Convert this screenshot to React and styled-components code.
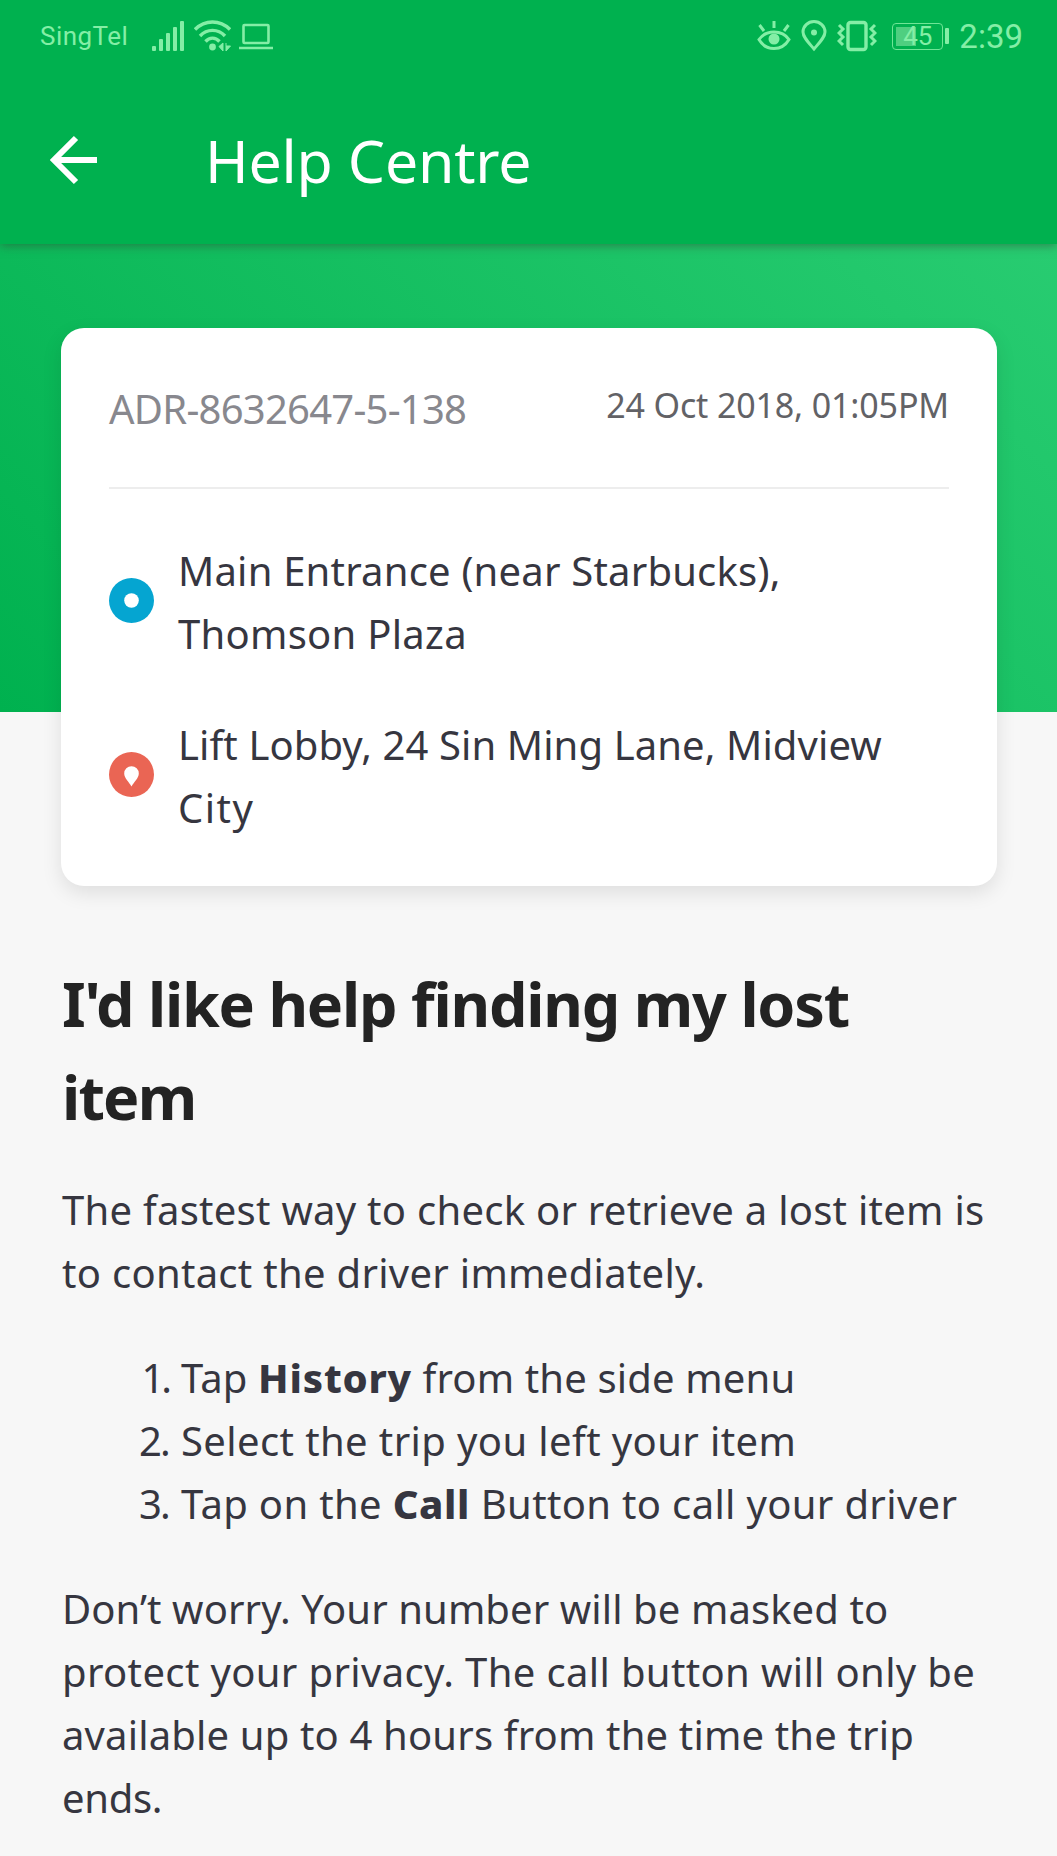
import React from "react";
import styled, { createGlobalStyle } from "styled-components";

const GlobalStyle = createGlobalStyle`
    * {
        box-sizing: border-box;
    }

    body {
        margin: 0;
        background: #f7f7f7;
        font-family: 'Noto Sans', 'Open Sans', sans-serif;
        color: #363640;
    }
`

const Page = styled.div`
    width: 1057px;
    height: 1856px;
    overflow: hidden;
    background: #f7f7f7;
`

const Header = styled.header`
    position: relative;
    z-index: 1;
    height: 244px;
    background: #00b14f;
    box-shadow: 0 2px 9px rgba(50, 70, 50, 0.5);
`

const StatusBar = styled.div`
    display: flex;
    justify-content: space-between;
    align-items: center;
    height: 72px;
    padding: 0 34px 0 40px;
    color: #84eea6;
    font-family: Roboto, sans-serif;

    & svg {
        display: block;
        flex: none;
    }
`

const StatusGroup = styled.div`
    display: flex;
    align-items: center;
    gap: ${(props) => props.$gap};
`

const Carrier = styled.span`
    width: 104px;
    font-size: 26px;
    letter-spacing: 0.45px;
`

const Battery = styled.div`
    display: flex;
    align-items: center;
    gap: 2px;
    margin: 0 0 0 5px;

    &::after {
        content: '';
        width: 4px;
        height: 16px;
        border-radius: 1px;
        background: #84eea6;
    }
`

const BatteryLevel = styled.div`
    width: 51px;
    height: 27px;
    border: 1.5px solid #6fe596;
    border-radius: 4px;
    background: linear-gradient(#4fcf80, #4fcf80) 3px 3px / 20px 19px no-repeat;
    font-size: 26px;
    line-height: 25px;
    text-align: center;
`

const Time = styled.span`
    font-size: 33px;
`

const AppBar = styled.div`
    display: flex;
    align-items: center;
    height: 172px;
    padding: 4px 48px 0 49px;
`

const Title = styled.h1`
    margin: 0 0 0 106px;
    font-size: 59px;
    line-height: 80px;
    font-weight: 400;
    letter-spacing: -0.2px;
    color: #fff;
`

const Hero = styled.section`
    height: 468px;
    padding: 84px 60px 0 61px;
    background: linear-gradient(45deg, #00b14f 0%, #28cc71 100%);
`

const Card = styled.div`
    height: 558px;
    padding: 49px 48px 47px;
    border-radius: 23px;
    background: #fff;
    box-shadow: 0 7px 20px rgba(0, 0, 0, 0.1);
`

const BookingRow = styled.div`
    display: flex;
    justify-content: space-between;
    height: 112px;
    border-bottom: 2px solid #ededed;
    white-space: nowrap;
`

const BookingId = styled.span`
    font-size: 40px;
    line-height: 63px;
    letter-spacing: -0.75px;
    color: #88888e;
`

const BookingDate = styled.span`
    margin-top: 3px;
    font-size: 34px;
    line-height: 50px;
    letter-spacing: -0.15px;
    color: #626266;
`

const Stops = styled.div`
    display: flex;
    flex-direction: column;
    gap: 48px;
    padding-top: 50px;
`

const Stop = styled.div`
    display: flex;
    gap: 24px;

    & svg {
        flex: none;
        margin-top: 39px;
    }
`

const Article = styled.article`
    padding: 245px 0 0 62px;
`

const Heading = styled.h2`
    margin: 0 0 35px;
    font-size: 61px;
    line-height: 93px;
    font-weight: 700;
    color: #232323;
`

const Text = styled.p`
    margin: 0 0 42px;
    font-size: 40px;
    line-height: 63px;
`

const StopText = styled(Text)`
    margin: 0;
`

const Steps = styled.ol`
    margin: 0 0 42px;
    padding: 0;
    list-style: none;
    font-size: 40px;
    line-height: 63px;
`

const Step = styled.li`
    display: flex;
    gap: 12px;
`

const StepNumber = styled.span`
    width: 107px;
    text-align: right;
    letter-spacing: ${(props) => props.$spacing || '-1.8px'};
`

const Bold = styled.strong`
    font-weight: 800;
    letter-spacing: ${(props) => props.$spacing || 0};
`

const Line = styled.span`
    display: block;
    white-space: nowrap;
    letter-spacing: ${(props) => props.$spacing || 0};
`

function SignalIcon() {
    return (
        <svg width="34" height="30" viewBox="0 0 34 30" fill="currentColor">
            <rect x="0" y="25" width="4" height="5" rx="1" />
            <rect x="7" y="18" width="4" height="12" rx="1" />
            <rect x="14" y="12" width="4" height="18" rx="1" />
            <rect x="21" y="6" width="4" height="24" rx="1" />
            <rect x="28" y="0" width="4" height="30" rx="1" />
        </svg>
    )
}

function WifiIcon() {
    return (
        <svg width="37" height="32" viewBox="0 0 37 32" fill="none" stroke="currentColor" strokeWidth="3.4">
            <path d="M1 9.5C11 -0.5 26 -0.5 36 9.5" />
            <path d="M6 16C13 8.5 24 8.5 31 16" />
            <path d="M11.5 21.5C15.5 17 21.5 17 25.5 21.5" />
            <circle cx="18.5" cy="27" r="3.4" fill="currentColor" stroke="none" />
            <path d="M29 23v8l-4-4.500zM32 31v-8M32 31l4.500-5h-4.500" fill="currentColor" strokeWidth="1" />
        </svg>
    )
}

function LaptopIcon() {
    return (
        <svg width="34" height="27" viewBox="0 0 34 27" fill="none" stroke="currentColor" strokeWidth="2.6">
            <rect x="4.5" y="2" width="25" height="18" rx="1" />
            <path d="M0 25h34" />
        </svg>
    )
}

function EyeIcon() {
    return (
        <svg width="34" height="30" viewBox="0 0 34 30" fill="none" stroke="currentColor" strokeWidth="3">
            <path d="M2 18.5C9 8.5 25 8.5 32 18.5C25 30.500 9 30.500 2 18.5Z" />
            <circle cx="17" cy="18" r="5.5" fill="currentColor" stroke="none" />
            <path d="M17 0v7M2.500 4l4.500 6M31.500 4l-4.500 6" />
        </svg>
    )
}

function PinIcon() {
    return (
        <svg width="26" height="32" viewBox="0 0 26 32" fill="none" stroke="currentColor" strokeWidth="3">
            <path d="M13 29C7 22 2 17 2 12a11 10.5 0 0 1 22 0c0 5-5 10-11 17Z" />
            <circle cx="13" cy="12.5" r="3" fill="currentColor" stroke="none" />
        </svg>
    )
}

function VibrateIcon() {
    return (
        <svg width="40" height="32" viewBox="0 0 40 32" fill="none" stroke="currentColor" strokeWidth="3.4">
            <rect x="11" y="2.5" width="18" height="27" rx="2.5" />
            <path d="M2 5l4 4-4 4 4 4-4 4 4 4M38 5l-4 4 4 4-4 4 4 4-4 4" strokeWidth="3" />
        </svg>
    )
}

function BackIcon() {
    return (
        <svg width="50" height="50" viewBox="0 0 50 50" fill="none" stroke="#fff" strokeWidth="6">
            <path d="M27 3L5 25l22 22M5 25h43" />
        </svg>
    )
}

function PickupIcon() {
    return (
        <svg width="45" height="45" viewBox="0 0 45 45">
            <circle cx="22.5" cy="22.5" r="22.5" fill="#05a5d1" />
            <circle cx="22.5" cy="22.5" r="7.3" fill="#fff" />
        </svg>
    )
}

function DropoffIcon() {
    return (
        <svg width="45" height="45" viewBox="0 0 45 45">
            <circle cx="22.5" cy="22.5" r="22.5" fill="#ea6554" />
            <path d="M22.5 34.5C20 30 15.2 26 15.2 21.5a7.3 7.3 0 0 1 14.6 0C29.8 26 25 30 22.5 34.5Z" fill="#fff" />
        </svg>
    )
}

function App() {
    return (
        <Page>
            <GlobalStyle />
            <Header>
                <StatusBar>
                    <StatusGroup $gap="8px">
                        <Carrier>SingTel</Carrier>
                        <SignalIcon />
                        <WifiIcon />
                        <LaptopIcon />
                    </StatusGroup>
                    <StatusGroup $gap="10px">
                        <EyeIcon />
                        <PinIcon />
                        <VibrateIcon />
                        <Battery>
                            <BatteryLevel>45</BatteryLevel>
                        </Battery>
                        <Time>2:39</Time>
                    </StatusGroup>
                </StatusBar>
                <AppBar>
                    <BackIcon />
                    <Title>Help Centre</Title>
                </AppBar>
            </Header>
            <Hero>
                <Card>
                    <BookingRow>
                        <BookingId>ADR-8632647-5-138</BookingId>
                        <BookingDate>24 Oct 2018, 01:05PM</BookingDate>
                    </BookingRow>
                    <Stops>
                        <Stop>
                            <PickupIcon />
                            <StopText>
                                <Line $spacing="0.2px">Main Entrance (near Starbucks),</Line>
                                <Line $spacing="0.28px">Thomson Plaza</Line>
                            </StopText>
                        </Stop>
                        <Stop>
                            <DropoffIcon />
                            <StopText>
                                <Line $spacing="0.1px">Lift Lobby, 24 Sin Ming Lane, Midview</Line>
                                <Line $spacing="1.5px">City</Line>
                            </StopText>
                        </Stop>
                    </Stops>
                </Card>
            </Hero>
            <Article>
                <Heading>
                    <Line $spacing="-1.2px">I'd like help finding my lost</Line>
                    <Line $spacing="-1.8px">item</Line>
                </Heading>
                <Text>
                    <Line $spacing="0.26px">The fastest way to check or retrieve a lost item is</Line>
                    <Line $spacing="0.29px">to contact the driver immediately.</Line>
                </Text>
                <Steps>
                    <Step>
                        <StepNumber $spacing="-3px">1.</StepNumber>
                        <Line $spacing="0.15px">Tap <Bold $spacing="0.8px">History</Bold> from the side menu</Line>
                    </Step>
                    <Step>
                        <StepNumber>2.</StepNumber>
                        <Line $spacing="0.39px">Select the trip you left your item</Line>
                    </Step>
                    <Step>
                        <StepNumber>3.</StepNumber>
                        <Line $spacing="0.34px">Tap on the <Bold $spacing="0.6px">Call</Bold> Button to call your driver</Line>
                    </Step>
                </Steps>
                <Text>
                    <Line $spacing="0.09px">Don’t worry. Your number will be masked to</Line>
                    <Line $spacing="0.36px">protect your privacy. The call button will only be</Line>
                    <Line $spacing="0.16px">available up to 4 hours from the time the trip</Line>
                    <Line $spacing="-0.3px">ends.</Line>
                </Text>
            </Article>
        </Page>
    )
}

export default App;
